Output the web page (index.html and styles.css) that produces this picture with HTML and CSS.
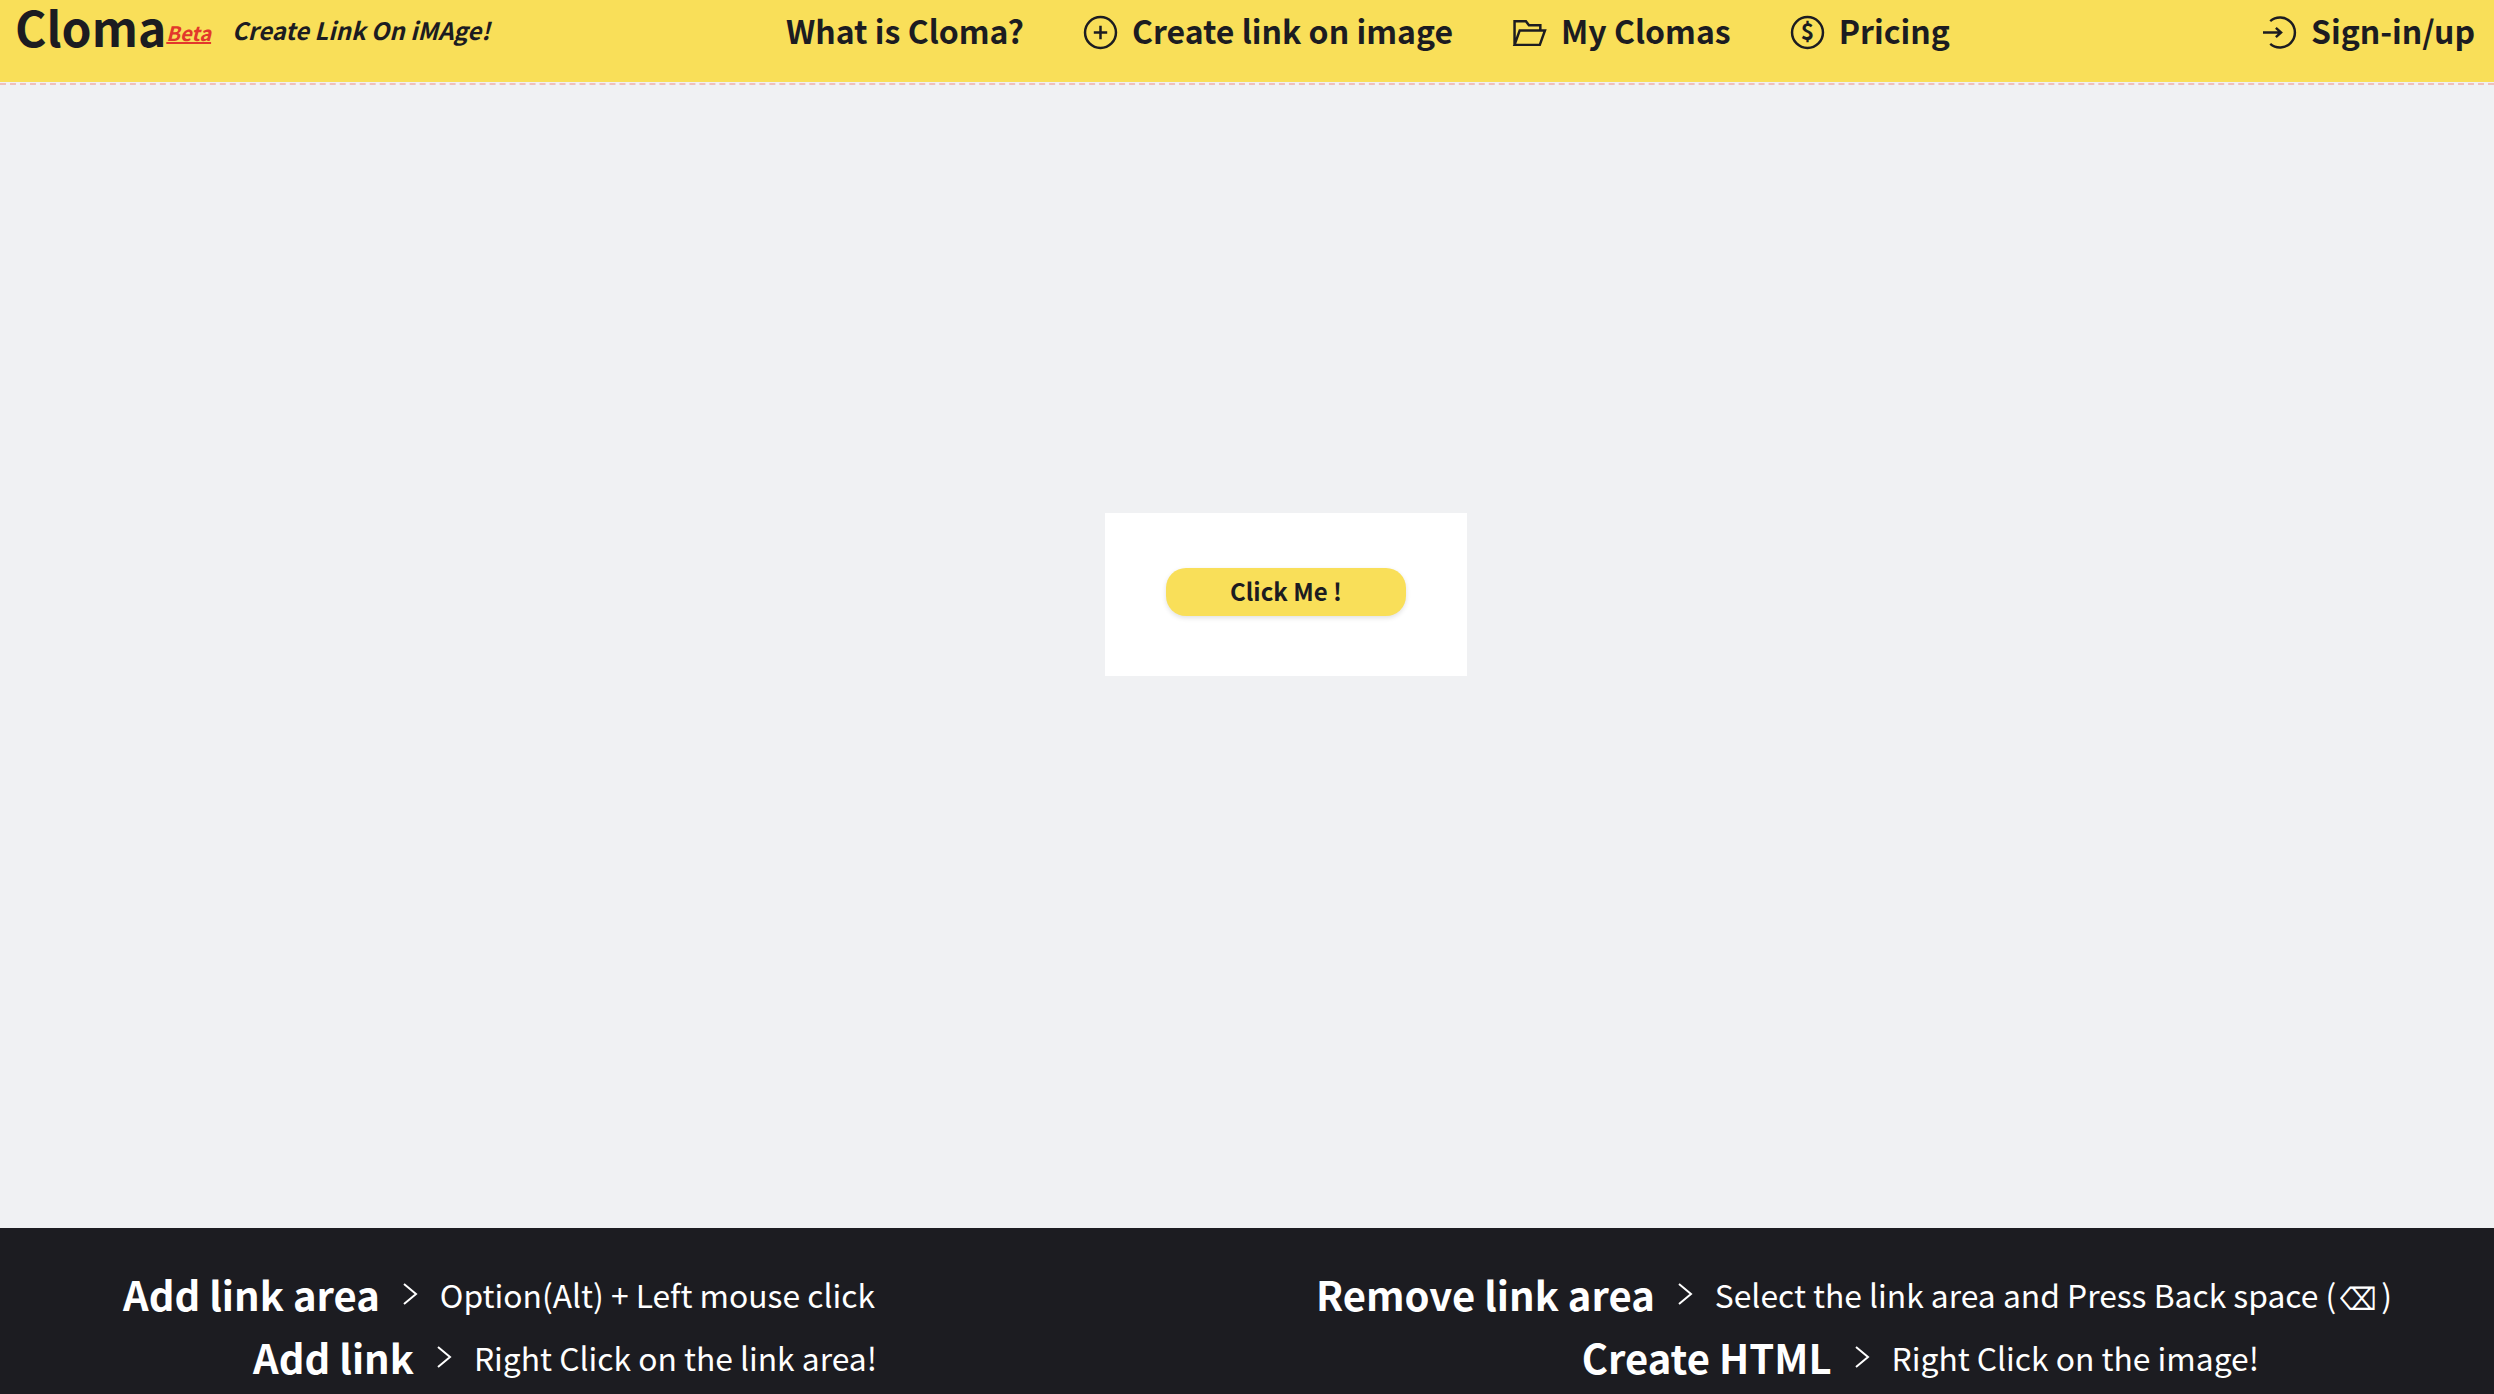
FILE: index.html
```html
<!DOCTYPE html>
<html lang="en">
<head>
<meta charset="utf-8">
<title>Cloma</title>
<link rel="stylesheet" href="styles.css">
</head>
<body>
<div class="page">
  <header class="topbar">
    <div class="brand">
      <a class="logo">Cloma</a>
      <a class="beta">Beta</a>
      <span class="tagline">Create Link On iMAge!</span>
    </div>
    <nav class="nav">
      <a class="nav-item">What is Cloma?</a>
      <a class="nav-item">
        <svg class="icon" viewBox="0 0 32 32"><circle cx="16" cy="16" r="15"/><path d="M16 9.500v13M9.500 16h13"/></svg>
        Create link on image
      </a>
      <a class="nav-item">
        <svg class="icon" viewBox="0 0 32 32"><path d="M1.500 28V5h11l3 4h11v5M1.500 28 6.500 14H31l-5 14z"/></svg>
        My Clomas
      </a>
      <a class="nav-item">
        <svg class="icon" viewBox="0 0 32 32"><circle cx="16" cy="16" r="15"/><text class="dollar" x="16" y="23.500" text-anchor="middle">$</text></svg>
        Pricing
      </a>
    </nav>
    <a class="nav-item signin">
      <svg class="icon" viewBox="0 0 32 32"><path d="M7 5A14.500 14.500 0 1 1 7 27M0 16h17M12.500 11.500l5 4.500-5 4.500"/></svg>
      Sign-in/up
    </a>
  </header>
  <main class="stage">
    <div class="card">
      <button class="cta">Click Me !</button>
    </div>
  </main>
  <footer class="help">
    <div class="help-col">
      <div class="help-row"><b>Add link area</b><svg class="chev" viewBox="0 0 16 24"><path d="M2 2l12 10L2 22"/></svg><span>Option(Alt) + Left mouse click</span></div>
      <div class="help-row nudged"><b>Add link</b><svg class="chev" viewBox="0 0 16 24"><path d="M2 2l12 10L2 22"/></svg><span>Right Click on the link area!</span></div>
    </div>
    <div class="help-col">
      <div class="help-row"><b>Remove link area</b><svg class="chev" viewBox="0 0 16 24"><path d="M2 2l12 10L2 22"/></svg><span>Select the link area and Press Back space (<i class="bksp">⌫</i>)</span></div>
      <div class="help-row shifted"><b>Create HTML</b><svg class="chev" viewBox="0 0 16 24"><path d="M2 2l12 10L2 22"/></svg><span>Right Click on the image!</span></div>
    </div>
  </footer>
</div>
</body>
</html>
```

FILE: styles.css
```css
* { box-sizing: border-box; }
html, body { margin: 0; height: 100%; }
body {
  font-family: "Noto Sans CJK KR", "Noto Sans", sans-serif;
  color: #1c1c21;
  background: #f0f1f3;
}
.page { height: 1394px; display: flex; flex-direction: column; overflow: hidden; }

.topbar {
  flex: none;
  height: 85px;
  padding: 0 19px 0 15px;
  display: flex;
  align-items: flex-start;
  background: #f9df59;
  background-clip: padding-box;
  border-bottom: 2px dashed #efc0bd;
  box-shadow: inset 0 -1px 0 #f0f1f3;
}
.brand { display: flex; align-items: flex-start; }
.logo { font-size: 48px; font-weight: 700; line-height: 52px; }
.beta { font-size: 20px; font-weight: 700; font-style: italic; line-height: 65px; color: #e2372b; text-decoration: underline; margin-left: 0; }
.tagline { font-size: 24px; font-weight: 700; font-style: italic; line-height: 59px; margin-left: 21px; }

.nav { display: flex; gap: 60px; margin-left: 296px; }
.nav-item {
  display: flex;
  align-items: center;
  gap: 15px;
  height: 59px;
  font-size: 32px;
  font-weight: 700;
  white-space: nowrap;
}
.signin { margin-left: auto; }
.icon { width: 33px; height: 33px; margin-top: 5px; flex: none; fill: none; stroke: #1c1c21; stroke-width: 2.400; overflow: visible; }
.dollar { font-size: 22px; font-weight: 700; fill: #1c1c21; stroke: none; }

.stage { flex: 1; display: flex; justify-content: center; align-items: center; padding: 0 0 124px 78px; }
.card {
  width: 362px;
  height: 163px;
  background: #fff;
  display: flex;
  justify-content: center;
  align-items: center;
  padding-bottom: 6px;
}
.cta {
  width: 240px;
  height: 48px;
  padding: 0 0 3px;
  border: 0;
  border-radius: 20px;
  background: #f9df59;
  color: #1c1c21;
  font: 700 24px "Noto Sans CJK KR", sans-serif;
  box-shadow: 0 2px 5px rgba(0, 0, 0, .12);
}

.help {
  flex: none;
  height: 166px;
  padding: 34px 102px 0 123px;
  display: flex;
  justify-content: space-between;
  background: #1c1c21;
  color: #fff;
}
.help-col { display: flex; flex-direction: column; align-items: flex-end; }
.help-row { display: flex; align-items: center; height: 63px; white-space: nowrap; }
.help-row b { font-size: 40px; font-weight: 700; }
.help-row span { font-size: 31.800px; font-weight: 400; }
.chev { width: 16px; height: 24px; margin: 0 22px 0 22px; fill: none; stroke: #fff; stroke-width: 2; }
.nudged { margin-right: -2px; }
.shifted { margin-right: 133px; }
.bksp { display: inline-block; margin: 0 4px; font-size: 26px; font-style: normal; transform: scaleY(1.200); }
```
